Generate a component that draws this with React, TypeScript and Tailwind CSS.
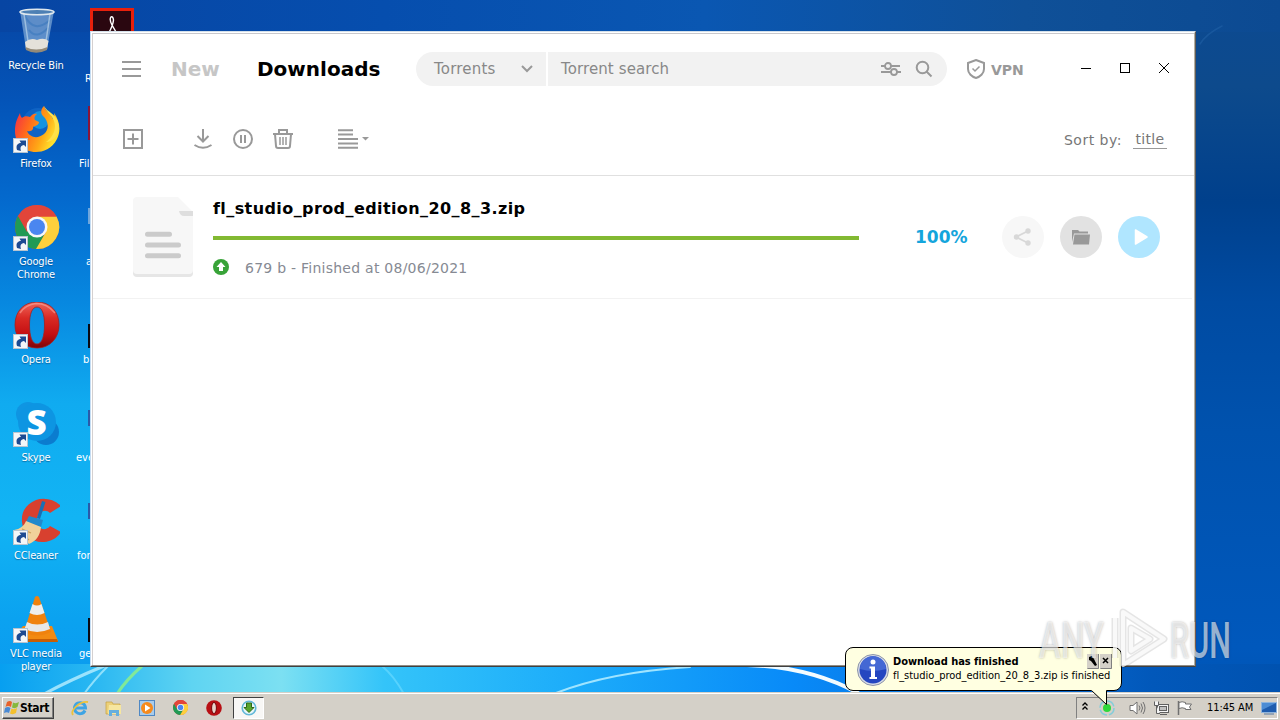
import React from "react";
import clsx from "clsx";

const TAHOMA = "font-['DejaVu_Sans_Condensed','DejaVu_Sans',sans-serif]";

function Wallpaper() {
    return (
        <svg className="absolute inset-0" width="1280" height="720" viewBox="0 0 1280 720">
            <defs>
                <linearGradient id="leftSide" x1="0" y1="0" x2="0" y2="1">
                    <stop offset="0" stopColor="#0745a3" />
                    <stop offset="0.14" stopColor="#0454b8" />
                    <stop offset="0.28" stopColor="#046ace" />
                    <stop offset="0.42" stopColor="#0788e0" />
                    <stop offset="0.56" stopColor="#10abf0" />
                    <stop offset="0.72" stopColor="#12b4f4" />
                    <stop offset="0.86" stopColor="#0ba2f0" />
                    <stop offset="1" stopColor="#0a96ee" />
                </linearGradient>
                <linearGradient id="rightSide" x1="0" y1="0" x2="0" y2="1">
                    <stop offset="0" stopColor="#0c4a92" />
                    <stop offset="0.12" stopColor="#0d4a8c" />
                    <stop offset="0.28" stopColor="#00408c" />
                    <stop offset="0.42" stopColor="#004ba2" />
                    <stop offset="0.6" stopColor="#0052ae" />
                    <stop offset="0.9" stopColor="#0058bc" />
                    <stop offset="1" stopColor="#0052b0" />
                </linearGradient>
                <linearGradient id="topStrip" x1="0" y1="0" x2="1" y2="0">
                    <stop offset="0" stopColor="#0745a3" />
                    <stop offset="0.3" stopColor="#064eae" />
                    <stop offset="0.55" stopColor="#0a57b2" />
                    <stop offset="0.8" stopColor="#0f5098" />
                    <stop offset="1" stopColor="#0c4a92" />
                </linearGradient>
                <linearGradient id="bottomStrip" x1="0" y1="0" x2="1" y2="0">
                    <stop offset="0" stopColor="#079ff0" />
                    <stop offset="0.07" stopColor="#27b6f2" />
                    <stop offset="0.15" stopColor="#5fd4f2" />
                    <stop offset="0.22" stopColor="#7ce0f2" />
                    <stop offset="0.3" stopColor="#34c4f9" />
                    <stop offset="0.45" stopColor="#1cacfa" />
                    <stop offset="0.62" stopColor="#088af8" />
                    <stop offset="0.72" stopColor="#0a78e4" />
                    <stop offset="0.9" stopColor="#0258ba" />
                    <stop offset="1" stopColor="#0052b0" />
                </linearGradient>
            </defs>
            <rect width="640" height="720" fill="url(#leftSide)" />
            <rect x="640" width="640" height="720" fill="url(#rightSide)" />
            <rect width="1280" height="32" fill="url(#topStrip)" />
            <rect y="664" width="1280" height="56" fill="url(#bottomStrip)" />
            <g fill="none" strokeLinecap="round">
                <path d="M44 694 Q70 680 104 666" stroke="#b9efff" strokeWidth="3" opacity="0.8" />
                <path d="M84 694 Q94 680 108 666" stroke="#b9f1ff" strokeWidth="2" opacity="0.7" />
                <path d="M117 694 Q126 680 142 666" stroke="#8df08a" strokeWidth="3" opacity="0.85" />
                <path d="M382 666 Q394 676 404 694" stroke="#6fdcff" strokeWidth="2" opacity="0.6" />
                <path d="M556 693 Q610 672 690 667" stroke="#9fe4ff" strokeWidth="2" />
                <path d="M747 665 Q810 667 858 693" stroke="#f2fbff" strokeWidth="4" />
                <path d="M1200 44 Q1206 34 1222 26" stroke="#2b6cae" strokeWidth="1.5" opacity="0.4" />
            </g>
        </svg>
    );
}

function ShortcutArrow() {
    return (
        <g>
            <rect x="1.5" y="32.5" width="14" height="14" fill="#f4f6f8" stroke="#b8c4d0" />
            <path d="M5 44 C3.500 39 6 37 9 37 L7.500 34.500 H14 V41 L12 39 C8.500 39.500 8 41.500 9 45 Z" fill="#1d4a92" />
        </g>
    );
}

function BinIcon() {
    return (
        <svg width="48" height="48" viewBox="0 0 48 48">
            <path d="M8 3 L14 41 Q25 47 35 41 L42 3 Z" fill="#7ba6d4" opacity="0.75" />
            <path d="M13 8 Q22 26 38 12 M17 22 Q24 32 36 20" stroke="#3a78bd" strokeWidth="2" fill="none" opacity="0.6" />
            <path d="M12 6 L17 40 M38 6 L33 40" stroke="#b9d4ea" strokeWidth="1.5" opacity="0.7" />
            <path d="M13 34 Q19 29 25 32 Q32 29 36.500 33 L35 41 Q24 47 14 41 Z" fill="#e4e1da" />
            <path d="M13.500 39 Q24 44 35.500 39 L35 42 Q24 47.500 14 42 Z" fill="#948a78" />
            <ellipse cx="25" cy="4" rx="17" ry="2.800" fill="#4d80b4" stroke="#dfe8ee" strokeWidth="1.6" />
        </svg>
    );
}

function FirefoxIcon() {
    return (
        <svg width="48" height="48" viewBox="0 0 48 48">
            <defs>
                <linearGradient id="fox" x1="0" y1="0" x2="1" y2="0.4">
                    <stop offset="0" stopColor="#f0264f" />
                    <stop offset="0.4" stopColor="#ff6a1c" />
                    <stop offset="0.75" stopColor="#ffa916" />
                    <stop offset="1" stopColor="#ffe02e" />
                </linearGradient>
            </defs>
            <circle cx="26" cy="18" r="16" fill="#0f63c4" />
            <circle cx="28" cy="14" r="9" fill="#1593e0" />
            <path
                d="M32 0 C33 5 39 8 41 13 C43 10 42 8 42 7 C48 15 49 25 45 33 C40 43 31 46 24 46 C11 46 3 37 3 25 C3 17 5 13 8 7 C8 9 9 11 10 12 C12 10 15 10 18 11 C20 8 23 7 25 8 C22 10 22 13 23 14 L27 16 C27 19 23 20 21 21 C22 24 18 26 15 25 C18 32 26 33 32 28 C38 23 36 14 31 10 C28 7 29 3 32 0 Z"
                fill="url(#fox)"
            />
            <path d="M32 0 C33 5 40 9 42 15 C45 23 41 31 34 36 C43 36 49 26 46 16 C44 8 35 6 32 0 Z" fill="#ffe14a" />
            <ShortcutArrow />
        </svg>
    );
}

function ChromeDisc() {
    return (
        <g>
            <circle cx="24" cy="24" r="22" fill="#e2453a" />
            <path d="M24 24 L5 13 A22 22 0 0 0 24 46 L32 30 Z" fill="#209a55" />
            <path d="M24 13.500 H43.500 A22 22 0 0 1 23 46 L33 29 Z" fill="#fdd03c" />
            <path d="M5 13 A22 22 0 0 1 43.500 13.500 H24 L14 29 Z" fill="#e2453a" />
            <circle cx="24" cy="24" r="10.500" fill="#f7f7f7" />
            <circle cx="24" cy="24" r="8" fill="#4a86f0" />
        </g>
    );
}

function ChromeIcon() {
    return (
        <svg width="48" height="48" viewBox="0 0 48 48">
            <g transform="translate(1 -1)">
                <ChromeDisc />
            </g>
            <ShortcutArrow />
        </svg>
    );
}

function OperaIcon() {
    return (
        <svg width="48" height="48" viewBox="0 0 48 48">
            <defs>
                <linearGradient id="operaRed" x1="0" y1="0" x2="0" y2="1">
                    <stop offset="0" stopColor="#f0655a" />
                    <stop offset="0.35" stopColor="#d92a24" />
                    <stop offset="0.7" stopColor="#c40f12" />
                    <stop offset="1" stopColor="#7d0508" />
                </linearGradient>
            </defs>
            <path
                fillRule="evenodd"
                d="M25 0 C38 0 47 9 47 23 C47 36 38 46 25 46 C12 46 3 36 3 23 C3 9 12 0 25 0 Z M25 5 C20 5 17.500 12 17.500 23 C17.500 34 20 42 25 42 C30 42 32.500 34 32.500 23 C32.500 12 30 5 25 5 Z"
                fill="url(#operaRed)"
                stroke="#a3201f"
                strokeWidth="0.8"
            />
            <path d="M8 11 C12 5 18 2 24 1.500 C33 1.500 39 6 43 11" stroke="#ffb9ac" strokeWidth="1.500" fill="none" opacity="0.5" />
            <ShortcutArrow />
        </svg>
    );
}

function SkypeIcon() {
    return (
        <svg className="overflow-visible" width="48" height="48" viewBox="0 0 48 48">
            <circle cx="16" cy="14" r="12" fill="#0f95e2" />
            <circle cx="34" cy="32" r="13" fill="#0b7ccf" />
            <circle cx="25" cy="22" r="19" fill="#0d95e2" />
            <text x="24.500" y="35" textAnchor="middle" fontSize="35" fontWeight="800" fill="#fff" fontFamily="Open Sans, sans-serif">
                S
            </text>
            <ShortcutArrow />
        </svg>
    );
}

function CCleanerIcon() {
    return (
        <svg width="48" height="48" viewBox="0 0 48 48">
            <path
                d="M49 8 C42 1 32 -1 24 2 C14 6 9 14 10 24 C11 36 20 45 32 44 C40 43 45 40 49 34 L38 28 C35 32 30 32 27 29 C24 25 24 19 27 16 C30 12 35 12 38 15 Z"
                fill="#d8402f"
            />
            <path d="M30 3 L33.500 4 L28 21 L25 20 Z" fill="#1a6fb4" />
            <path d="M17 18 L31 22 L29 29 L14 24 Z" fill="#2289cc" />
            <path d="M14 23 L29 29 C28 38 24 43 17 46 L2 32 C8 31 12 28 14 23 Z" fill="#f1d19a" />
            <path d="M10 31 L19 35 M8 34 L17 42" stroke="#cfa05c" strokeWidth="1.200" />
            <ShortcutArrow />
        </svg>
    );
}

function VlcIcon() {
    return (
        <svg width="48" height="48" viewBox="0 0 48 48">
            <path d="M6 36 L11 30 H40 L46 45 H8 Z" fill="#f28a12" />
            <path d="M8 43 H45 L46 46 H8 Z" fill="#c75e05" />
            <path d="M23 1 Q25 -1 27 1 L39 36 Q25 43 12 36 Z" fill="#f0820e" />
            <path d="M20.500 8 Q25 11 29.500 8 L32.500 17 Q25 21 17.500 17 Z" fill="#eeeeee" />
            <path d="M15 26 Q25 31 36 26 L38 33 Q25 39 12.500 33 Z" fill="#e8e8e8" />
            <ShortcutArrow />
        </svg>
    );
}

const shortcuts = [
    { label: "Recycle Bin", icon: <BinIcon /> },
    { label: "Firefox", icon: <FirefoxIcon /> },
    { label: "Google Chrome", icon: <ChromeIcon /> },
    { label: "Opera", icon: <OperaIcon /> },
    { label: "Skype", icon: <SkypeIcon /> },
    { label: "CCleaner", icon: <CCleanerIcon /> },
    { label: "VLC media player", icon: <VlcIcon /> },
];

// second column is almost hidden by the torrent window
const hiddenShortcuts = [
    { label: "R", pad: "pl-[11px] pt-[13px]", sliver: "bg-[#e4e8ee] h-[14px] mt-[32px]" },
    { label: "Fil", pad: "pl-[5px]", sliver: "bg-[#8a1438] h-[34px] mt-0" },
    { label: "a", pad: "pl-[12px]", sliver: "bg-[#6fa6dc] h-[16px] mt-[4px]" },
    { label: "b", pad: "pl-[9px]", sliver: "bg-[#0a0a12] h-[24px] mt-[22px]" },
    { label: "eve", pad: "pl-[2px]", sliver: "bg-[#2a5aa8] h-[16px] mt-[10px]" },
    { label: "for", pad: "pl-[3px]", sliver: "bg-[#2a5aa8] h-[16px] mt-[5px]" },
    { label: "ge", pad: "pl-[5px]", sliver: "bg-[#0a0a12] h-[24px] mt-[22px]" },
];

function Desktop() {
    return (
        <div className={clsx("relative flex h-[692px] text-[11px] leading-[13px] text-white", TAHOMA)}>
            <div className="flex w-[72px] flex-col">
                {shortcuts.map((s) => (
                    <div key={s.label} className="flex h-[98px] shrink-0 flex-col items-center pt-2 text-center">
                        {s.icon}
                        <span className="mt-[3px] w-[62px] tracking-[-0.15px] [text-shadow:0_1px_1px_#00306080]">{s.label}</span>
                    </div>
                ))}
            </div>
            <div className="flex w-[62px] flex-col pl-[2px]">
                {hiddenShortcuts.map((s, i) => (
                    <div key={s.label} className="flex h-[98px] shrink-0 flex-col pt-2">
                        <div className="flex h-[48px] pl-[14px]">
                            {i === 0 ? (
                                <div className="ml-[2px] flex h-[44px] w-[44px] shrink-0 justify-center border-[3px] border-[#e8200c] bg-[#2a0710] pt-[5px]">
                                    <svg width="12" height="24" viewBox="0 0 12 24" fill="none" stroke="#fff" strokeWidth="1.400">
                                        <path d="M2 18 Q7 10 7.500 4 Q7 0 5 1 Q3 3 6 9 L10 16" />
                                    </svg>
                                </div>
                            ) : (
                                <div className={clsx("w-3", s.sliver)} />
                            )}
                        </div>
                        <span className={clsx("mt-[3px]", s.pad)}>{s.label}</span>
                    </div>
                ))}
            </div>
        </div>
    );
}

function TitleBar() {
    return (
        <div className="flex h-[70px] items-center pl-[29px]">
            <svg width="19" height="18" viewBox="0 0 19 18" stroke="#999" strokeWidth="2">
                <path d="M0 2 H19 M0 9 H19 M0 16 H19" />
            </svg>
            <span className="ml-[30px] w-[86px] text-[20px] font-bold text-[#c6c6c6]">New</span>
            <span className="w-[159px] text-[20px] font-bold text-black">Downloads</span>
            <div className="flex h-[34px] w-[531px] shrink-0 overflow-hidden rounded-full text-[15px] text-[#888]">
                <div className="flex w-[130px] items-center justify-between bg-[#f2f2f2] pl-[18px] pr-[13px]">
                    <span className="tracking-[0.2px]">Torrents</span>
                    <svg width="12" height="8" viewBox="0 0 12 8" fill="none" stroke="#999" strokeWidth="2">
                        <path d="M1 1 L6 6 L11 1" />
                    </svg>
                </div>
                <div className="ml-[2px] flex flex-1 items-center bg-[#f2f2f2] pl-[13px] pr-[14px]">
                    <span className="flex-1 tracking-[0.1px]">Torrent search</span>
                    <svg width="20" height="14" viewBox="0 0 20 14" fill="none" stroke="#999" strokeWidth="1.800">
                        <path d="M0 4 H4 M10 4 H19 M0 10 H10 M16 10 H20" />
                        <circle cx="7" cy="4" r="3" />
                        <circle cx="13" cy="10" r="3" />
                    </svg>
                    <svg className="ml-[14px]" width="18" height="18" viewBox="0 0 18 18" fill="none" stroke="#999" strokeWidth="2">
                        <circle cx="7.500" cy="7.500" r="5.800" />
                        <path d="M11.500 11.500 L16.500 16.500" />
                    </svg>
                </div>
            </div>
            <svg className="ml-[20px]" width="18" height="20" viewBox="0 0 18 20" fill="none" stroke="#999" strokeWidth="2">
                <path d="M9 1 L17 4 V10 C17 14.500 13 18 9 19 C5 18 1 14.500 1 10 V4 Z" />
                <path d="M5.500 9.500 L8 12 L12.500 7.500" strokeWidth="1.500" />
            </svg>
            <span className="ml-[6px] w-[89px] pt-[2px] text-[14px] font-bold text-[#999]">VPN</span>
            <svg width="90" height="12" viewBox="0 0 90 12" fill="none" stroke="#000" className="mb-[3px]">
                <path d="M1 6.500 H11" />
                <rect x="40.500" y="1.500" width="9" height="9" />
                <path d="M79 1 L89 11 M89 1 L79 11" />
            </svg>
        </div>
    );
}

function Toolbar() {
    return (
        <div className="flex h-[72px] items-center border-b border-[#e0e0e0] pl-[30px] pr-[27px]">
            <svg className="mb-[2px]" width="246" height="20" viewBox="0 0 246 20" fill="none" stroke="#999" strokeWidth="2">
                <rect x="1" y="1" width="18" height="18" />
                <path d="M4.500 10 H15.500 M10 4.500 V15.500" />
                <path d="M80 0 V12 M74.500 7 L80 12.500 L85.500 7 M71.500 16 Q80 21.500 88.500 16" />
                <circle cx="120" cy="10" r="9" />
                <path d="M118 6 V14 M122 6 V14" />
                <path d="M150 5 H170 M156 5 V1 H164 V5 M152 5 L153 17 Q153 19 155 19 H165 Q167 19 167 17 L168 5" />
                <path d="M157 8 V16 M160 8 V16 M163 8 V16" strokeWidth="1.500" />
                <path d="M215 1.200 H230 M215 5.600 H230 M215 10 H235 M215 14.400 H235 M215 18.800 H235" />
                <path d="M239 8 H246 L242.500 11.500 Z" fill="#999" stroke="none" />
            </svg>
            <div className="ml-auto flex items-start text-[14px] leading-[18px] text-[#777]">
                <span className="mt-[1px] tracking-[0.5px]">Sort by:</span>
                <span className="ml-[11px] w-[34px] border-b border-[#999] text-center tracking-[0.3px]">title</span>
            </div>
        </div>
    );
}

function TorrentRow() {
    return (
        <div className="mr-[2px] flex h-[123px] items-start border-b border-[#f2f2f2] pl-[40px] pt-[21px]">
            <svg width="60" height="80" viewBox="0 0 60 80">
                <path d="M4 2 H46 L60 18 V76 Q60 80 56 80 H4 Q0 80 0 76 V6 Q0 2 4 2 Z" fill="#e6e6e6" />
                <path d="M4 0 H45 L60 15 V73 Q60 77 56 77 H4 Q0 77 0 73 V4 Q0 0 4 0 Z" fill="#f7f7f7" />
                <path d="M46 14 H60 V19 H51 Q47 19 46 14 Z" fill="#dedede" />
                <path d="M14.500 37.300 H36.500 M14.500 48 H45.500 M14.500 58.700 H45.500" stroke="#cbcbcb" strokeWidth="5" strokeLinecap="round" />
            </svg>
            <div className="ml-5 flex w-[646px] flex-col">
                <span className="mt-[1px] text-[16px] leading-[22px] font-bold tracking-[0.41px] text-black [font-variant-ligatures:common-ligatures]">fl_studio_prod_edition_20_8_3.zip</span>
                <div className="mt-[16px] h-[4px] bg-[#82b932]" />
                <div className="mt-[18px] flex items-center text-[14px] leading-[18px] text-[#868a93]">
                    <svg width="16" height="16" viewBox="0 0 16 16">
                        <circle cx="8" cy="8" r="8" fill="#38a338" />
                        <path d="M8 3 L12.500 8 H10 V12 H6 V8 H3.500 Z" fill="#fff" />
                    </svg>
                    <span className="mt-[1px] -mb-[1px] ml-4 tracking-[0.25px]">679 b - Finished at 08/06/2021</span>
                </div>
            </div>
            <div className="ml-[56px] flex h-[78px] items-center pt-[1px]">
                <span className="w-[87px] pt-[3px] text-[17px] font-bold text-[#14a5dc]">100%</span>
                <div className="flex gap-4">
                    <svg width="42" height="42" viewBox="0 0 42 42">
                        <circle cx="21" cy="21" r="21" fill="#f7f7f7" />
                        <path d="M27 14.500 L14 21 L27 27.500" fill="none" stroke="#d8d8d8" strokeWidth="1.800" />
                        <circle cx="26" cy="15" r="2.700" fill="#d8d8d8" />
                        <circle cx="14.500" cy="21" r="2.700" fill="#d8d8d8" />
                        <circle cx="26" cy="27" r="2.700" fill="#d8d8d8" />
                    </svg>
                    <svg width="42" height="42" viewBox="0 0 42 42">
                        <circle cx="21" cy="21" r="21" fill="#e2e2e2" />
                        <path d="M12 14 H18 L19.500 15.500 H28 V17.500 H14 L12 26 Z" fill="#999" />
                        <path d="M14.500 18.500 H30 L29 28.500 H13 Z" fill="#999" />
                    </svg>
                    <svg width="42" height="42" viewBox="0 0 42 42">
                        <circle cx="21" cy="21" r="21" fill="#b0e6ff" />
                        <path d="M17.500 14 L29 21 L17.500 28 Z" fill="#fff" stroke="#fff" strokeWidth="1.500" strokeLinejoin="round" />
                    </svg>
                </div>
            </div>
        </div>
    );
}

function TorrentWindow() {
    return (
        <div className="absolute top-[31px] left-[90px] h-[636px] w-[1106px] border border-t-[#d4e0ea] border-r-[#605c58] border-b-[#404040] border-l-[#c4dcf2] bg-white">
            <div className="h-full border border-t-white border-r-[#b4b0a4] border-b-[#908c84] border-l-white">
                <div className="h-full border-t border-l border-t-[#c8c8cc] border-l-[#d4d0d0] font-['DejaVu_Sans',sans-serif]">
                    <TitleBar />
                    <Toolbar />
                    <TorrentRow />
                </div>
            </div>
        </div>
    );
}

function Watermark() {
    return (
        <div className="absolute top-[608px] left-[1039px] flex h-[60px] w-[196px] items-center font-['Roboto',sans-serif] text-[50px] leading-none font-medium text-white/60 [text-shadow:0_0_3px_#00000048]">
            <span className="w-[70px] origin-left scale-x-[0.66] pt-[6px]">ANY</span>
            <svg className="shrink-0" width="60" height="60" viewBox="0 0 60 60" fill="none" strokeLinejoin="round">
                <path d="M6 50 V10 M14 57 V4 L55 31 Z M22 43 V20 L41 31 Z" stroke="#000" strokeOpacity="0.1" strokeWidth="7" />
                <path d="M6 50 V10 M14 57 V4 L55 31 Z M22 43 V20 L41 31 Z" stroke="#fff" strokeOpacity="0.75" strokeWidth="4" />
            </svg>
            <span className="ml-[1px] w-[60px] origin-left scale-x-[0.61] pt-[6px]">RUN</span>
        </div>
    );
}

function Balloon() {
    return (
        <div className={clsx("absolute top-[647px] left-[845px] flex h-[44px] w-[277px] rounded-[8px] border border-black bg-[#ffffe1] pt-[6px] pl-[11px] text-[11px] leading-[14px] text-black", TAHOMA)}>
            <svg width="32" height="32" viewBox="0 0 32 32">
                <circle cx="16" cy="16" r="15.500" fill="#d8dce8" stroke="#8c94a8" />
                <circle cx="16" cy="16" r="13.500" fill="#2446c0" />
                <path d="M3 15 A13 13 0 0 1 29 15 Q16 19 3 15 Z" fill="#4468d4" />
                <circle cx="16" cy="8" r="2.500" fill="#fff" />
                <path d="M12.500 12.500 H18 V23 H20 V25 H12.500 V23 H14 V14.500 H12.500 Z" fill="#fff" />
            </svg>
            <div className="ml-[4px] flex flex-1 flex-col whitespace-nowrap">
                <div className="flex h-[15px] justify-between pr-[9px]">
                    <span className="pt-[1px] font-bold tracking-[-0.05px]">Download has finished</span>
                    <svg width="25" height="15" viewBox="0 0 25 15">
                        <path d="M0 0 H12 V15 H0 Z M13 0 H25 V15 H13 Z" fill="#d4d0c8" />
                        <path d="M0.500 14.500 H11.500 V0 M13.500 14.500 H24.500 V0" fill="none" stroke="#808080" />
                        <path d="M2 3 L5 2 L7 5 L10 11 L8 12 L4 7 L2 6 Z" fill="#000" />
                        <path d="M16 4 L21 9 M21 4 L16 9" stroke="#000" strokeWidth="1.500" />
                    </svg>
                </div>
                <span className="tracking-[-0.03px]">fl_studio_prod_edition_20_8_3.zip is finished</span>
            </div>
            <svg className="absolute top-[41px] left-[244px]" width="20" height="17" viewBox="0 0 20 17">
                <path d="M1 0 L1.500 1.500 L16.500 15.500 V0 Z" fill="#ffffe1" />
                <path d="M1.500 1.500 L16.500 15.500 V1.500" fill="none" stroke="#000" />
            </svg>
        </div>
    );
}

function QuickLaunch() {
    return (
        <div className="ml-[17px] flex items-center">
            <svg width="18" height="18" viewBox="0 0 18 18" fill="none">
                <path d="M14 11.500 A5.500 5.500 0 1 1 14.500 9 H4" stroke="#3ea4e4" strokeWidth="3" />
                <path d="M2 16 C-1 12 8 2 17 3" stroke="#ecc23c" strokeWidth="1.800" />
            </svg>
            <svg className="ml-[16px]" width="17" height="18" viewBox="0 0 17 18">
                <path d="M1 3 H7 L8 5 H15 V15 H1 Z" fill="#ecd078" stroke="#c4a040" strokeWidth="0.700" />
                <path d="M4 6 H16 V15 H3 Z" fill="#f6e6a0" />
                <path d="M4 17 V11 H14 V17 H11 V14 H7 V17 Z" fill="#65aede" />
            </svg>
            <svg className="ml-[17px]" width="16" height="16" viewBox="0 0 16 16">
                <rect x="0.500" y="0.500" width="15" height="15" fill="#a8ccec" stroke="#4f88c4" />
                <circle cx="8" cy="8" r="6" fill="#f68a1c" />
                <path d="M6 4.500 L11.500 8 L6 11.500 Z" fill="#fff" />
            </svg>
            <svg className="ml-[18px]" width="15" height="15" viewBox="2 2 44 44">
                <ChromeDisc />
            </svg>
            <svg className="ml-[18px]" width="16" height="16" viewBox="0 0 16 16">
                <circle cx="8" cy="8" r="7.800" fill="#b80f14" />
                <ellipse cx="8" cy="8" rx="2.400" ry="5.600" fill="#e8d4cc" stroke="#720407" />
            </svg>
            <div className="ml-[11px] flex h-[22px] w-[31px] items-center justify-center border border-t-[#404040] border-r-white border-b-white border-l-[#404040] bg-[#f8f7f5]">
                <svg width="16" height="16" viewBox="0 0 16 16">
                    <circle cx="8" cy="8" r="6.800" fill="#e8f6fa" stroke="#63b8d8" strokeWidth="1.600" />
                    <path d="M5.500 3 H10.500 V7.500 H13 L8 12.500 L3 7.500 H5.500 Z" fill="#5aa52c" stroke="#2c6a14" />
                </svg>
            </div>
        </div>
    );
}

function Taskbar() {
    return (
        <div className={clsx("relative flex h-[28px] items-center border-t border-[#d4d0c8] bg-[#d4d0c8] pl-[2px] pr-[2px] text-[11px] text-black shadow-[inset_0_1px_0_#fff]", TAHOMA)}>
            <div className="mt-[2px] flex h-[22px] w-[52px] items-center border border-t-white border-r-[#404040] border-b-[#404040] border-l-white pl-[1px] shadow-[inset_-1px_-1px_0_#808080]">
                <svg width="16" height="16" viewBox="0 0 16 16" className="shrink-0">
                    <path d="M3 2 Q6 0 8 2 L7 7 Q4 5 1.500 7 Z" fill="#e8622a" />
                    <path d="M9 2.500 Q12 4 15 2 L13.500 7 Q11 9 8 7.500 Z" fill="#86b83c" />
                    <path d="M1 8 Q4 6 6.500 8 L5 13 Q3 11.500 0 13 Z" fill="#4a8ad4" />
                    <path d="M7.500 8.500 Q10 10 13 8 L12 13 Q9 15 6 13.500 Z" fill="#f4c02c" />
                </svg>
                <span className="pt-[1px] text-[12px] font-bold tracking-[-0.3px]">Start</span>
            </div>
            <div className="mt-[2px] flex">
                <QuickLaunch />
            </div>
            <div className="mt-[2px] ml-auto flex h-[22px] w-[202px] items-center border border-t-[#808080] border-r-white border-b-white border-l-[#808080] pl-[5px]">
                <svg width="6" height="9" viewBox="0 0 6 9" fill="none" stroke="#000" strokeWidth="1.300" className="mb-[3px]">
                    <path d="M0.500 3.500 L3 1 L5.500 3.500 M0.500 7.500 L3 5 L5.500 7.500" />
                </svg>
                <svg className="ml-[11px]" width="16" height="16" viewBox="0 0 16 16">
                    <circle cx="8" cy="8" r="7" fill="none" stroke="#84ccda" strokeWidth="1.500" strokeDasharray="9 2" />
                    <circle cx="8" cy="8" r="4" fill="#2ed83c" />
                </svg>
                <svg className="ml-[14px]" width="17" height="16" viewBox="0 0 17 16" fill="#fff" stroke="#707070">
                    <path d="M1 5.500 H4 L8 2 V14 L4 10.500 H1 Z" />
                    <path d="M10 5.500 Q12 8 10 10.500 M12 3.500 Q15 8 12 12.500 M14 2 Q18 8 14 14" fill="none" />
                </svg>
                <svg className="ml-[7px]" width="17" height="16" viewBox="0 0 17 16" fill="#f4f4f4" stroke="#606060">
                    <rect x="4.500" y="4.500" width="11" height="8" />
                    <rect x="6.500" y="6.500" width="7" height="4" fill="#c0c0c0" />
                    <path d="M7 14.500 H14 M1.500 1.500 V5.500 H5.500 V1.500 M3.500 5.500 V13.500 H7" />
                </svg>
                <svg className="ml-[7px]" width="16" height="16" viewBox="0 0 16 16" fill="#fff" stroke="#707070">
                    <path d="M1.500 1 V15" strokeWidth="1.500" />
                    <path d="M2 2.500 Q5 1 8.500 2.500 V4 H14.500 L12.500 7 L14 9.500 H8.500 V8.500 Q5 7 2 8.500 Z" />
                </svg>
                <span className="ml-[14px] w-[47px] pt-[1px] whitespace-nowrap tracking-[-0.1px]">11:45 AM</span>
                <svg className="ml-[7px]" width="16" height="14" viewBox="0 0 16 14">
                    <rect x="0.500" y="1.500" width="15" height="10" fill="#1e5cae" stroke="#8fb4dc" />
                    <path d="M1 2 H15 L1 9 Z" fill="#4c8cd4" />
                    <path d="M3 13 H13" stroke="#5478a4" />
                </svg>
            </div>
        </div>
    );
}

function App() {
    return (
        <div className="relative flex h-[720px] w-[1280px] flex-col overflow-hidden bg-[#0456b9]">
            <Wallpaper />
            <Desktop />
            <TorrentWindow />
            <Taskbar />
            <Balloon />
            <Watermark />
        </div>
    );
}

export default App;
